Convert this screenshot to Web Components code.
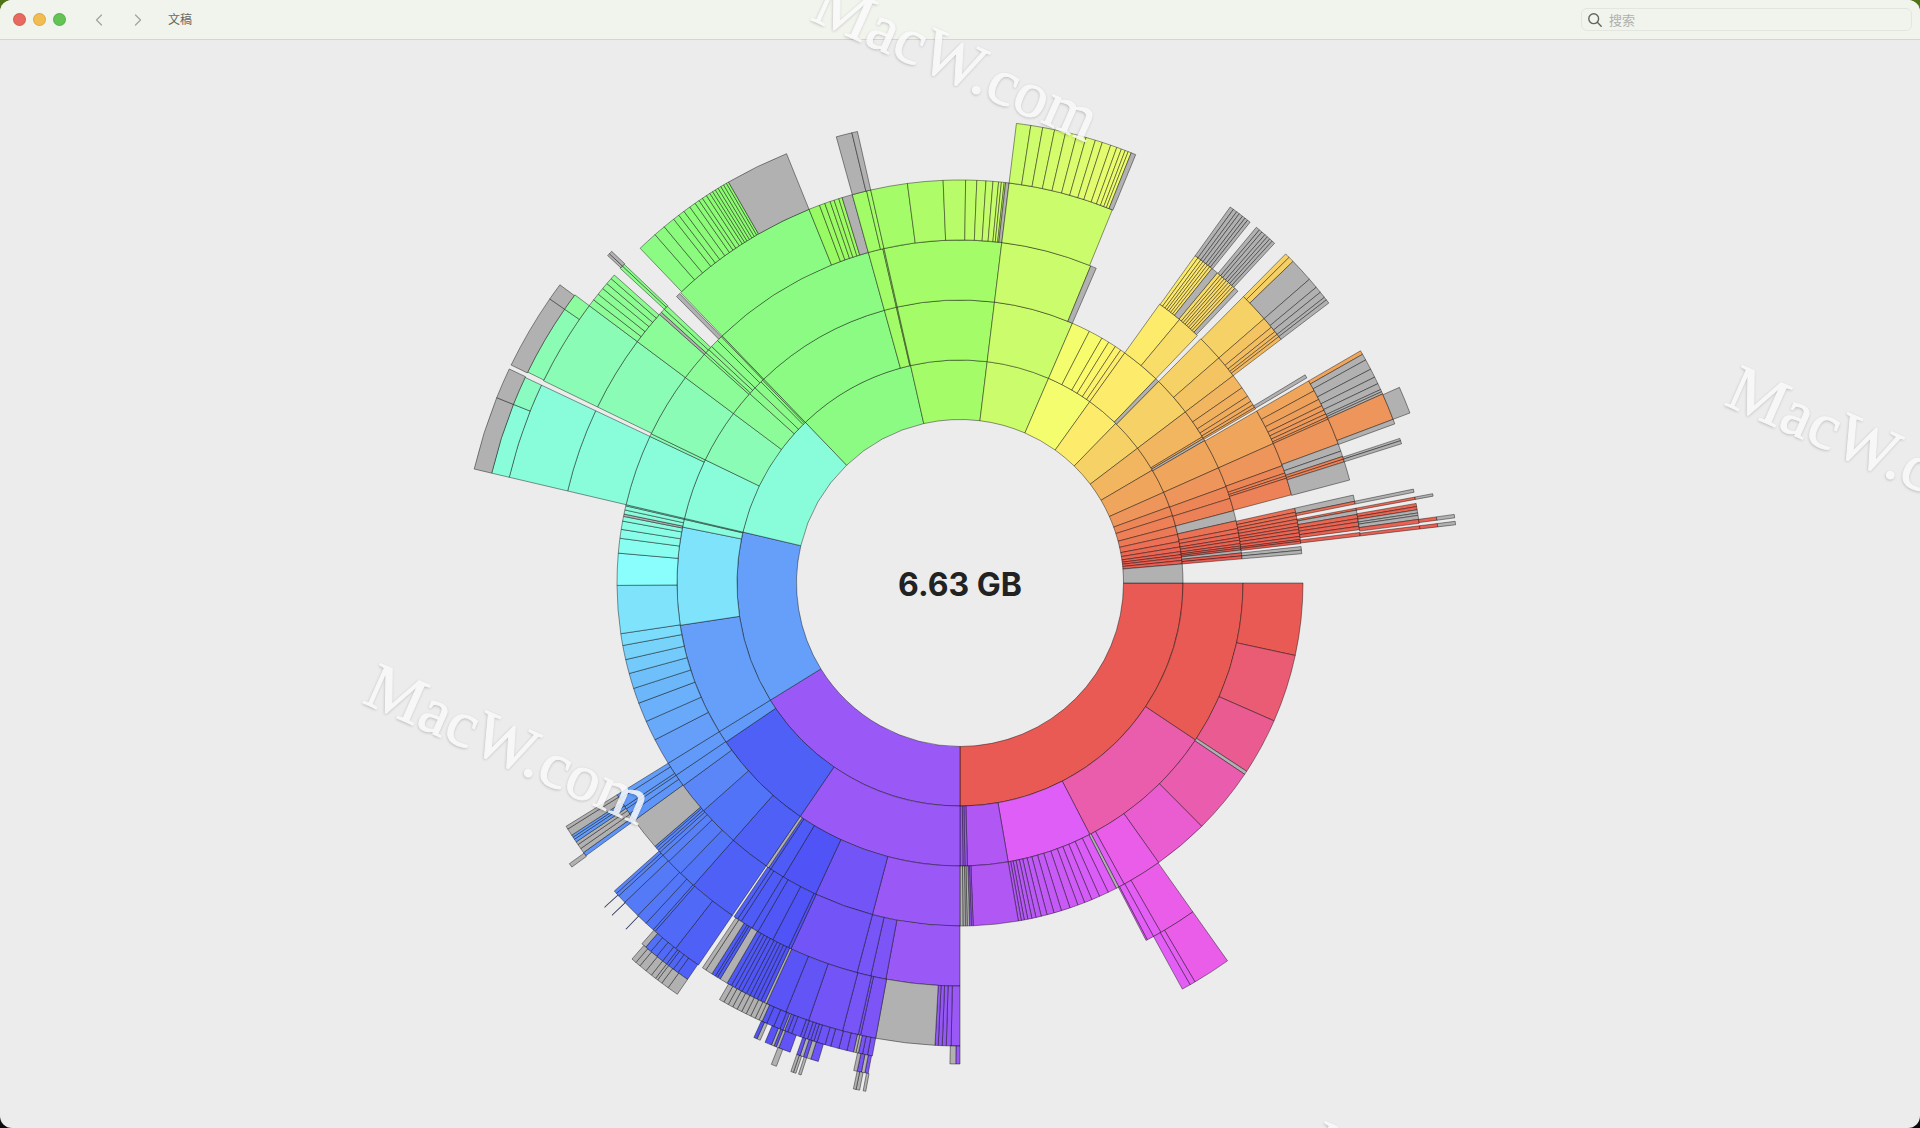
<!DOCTYPE html>
<html lang="zh-CN">
<head>
<meta charset="utf-8">
<title>文稿</title>
<style>
  html, body { height: 100%; }
  body {
    margin: 0;
    background: linear-gradient(#4f7416, #20240f 60%, #0c0d0b);
    font-family: Inter, "Noto Sans CJK SC", sans-serif;
    overflow: hidden;
  }
</style>
</head>
<body>
<disk-window>
  <title-bar slot="bar" heading="文稿">
    <search-field slot="tools" placeholder="搜索"></search-field>
  </title-bar>
  <sunburst-chart><span>6.63 GB</span></sunburst-chart>
  <water-mark slot="marks" style="--x:361px;--y:702px">MacW.com</water-mark>
  <water-mark slot="marks" style="--x:809px;--y:19px">MacW.com</water-mark>
  <water-mark slot="marks" style="--x:1723px;--y:404px">MacW.com</water-mark>
  <water-mark slot="marks" style="--x:1306px;--y:1160px">MacW.com</water-mark>
</disk-window>

<script>
class Base extends HTMLElement {
  constructor() {
    super();
    this.attachShadow({ mode: "open" });
  }
  connectedCallback() {
    this.shadowRoot.innerHTML = this.render();
  }
}

customElements.define("disk-window", class extends Base {
  render() {
    return `<style>
      :host { display: flex; flex-direction: column; height: 100vh; position: relative;
        overflow: hidden; border-radius: 12px; background: #ececec; }
      main { flex: 1; min-height: 0; display: flex; }
      ::slotted(sunburst-chart) { flex: 1; }
    </style>
    <slot name="bar"></slot>
    <main><slot></slot></main>
    <slot name="marks"></slot>`;
  }
});

customElements.define("title-bar", class extends Base {
  render() {
    return `<style>
      :host { display: block; }
      header { display: flex; align-items: center; height: 40px; box-sizing: border-box;
        padding: 0 8px 0 13px; background: #f1f4ed; border-bottom: 1px solid #d4d6d0; }
      button { border: 0; padding: 0; background: none; display: grid; place-items: center; }
      .lights { display: flex; gap: 7px; }
      .lights button { width: 13px; height: 13px; border-radius: 50%; box-shadow: inset 0 0 0 1px #0000001a; }
      nav { display: flex; gap: 15px; margin: 0 18px 0 21px; }
      nav button { width: 24px; height: 24px; }
      path { fill: none; stroke: #a3a59f; stroke-width: 1.3; stroke-linecap: round; stroke-linejoin: round; }
      h1 { margin: 0; font-size: 12px; line-height: 16px; font-weight: 400; color: #656762; }
      .gap { flex: 1; }
    </style>
    <header>
      <div class="lights">
        <button aria-label="关闭" style="background:#e8695f"></button>
        <button aria-label="最小化" style="background:#f2bc50"></button>
        <button aria-label="缩放" style="background:#63c455"></button>
      </div>
      <nav>
        <button aria-label="后退"><svg width="12" height="12"><path d="M8.5 1 3.5 6l5 5"/></svg></button>
        <button aria-label="前进"><svg width="12" height="12"><path d="m3.500 1 5 5-5 5"/></svg></button>
      </nav>
      <h1>${this.getAttribute("heading")}</h1>
      <div class="gap"></div>
      <slot name="tools"></slot>
    </header>`;
  }
});

customElements.define("search-field", class extends Base {
  render() {
    const p = this.getAttribute("placeholder");
    return `<style>
      :host { display: block; }
      label { display: flex; align-items: center; gap: 7px; width: 331px; height: 23px;
        box-sizing: border-box; padding: 0 6px; border: 1px solid #e3e6df; border-radius: 6px; }
      svg { flex: none; }
      input { flex: 1; min-width: 0; border: 0; padding: 0; outline: 0; background: none;
        font: 13px/20px "Noto Sans CJK SC", sans-serif; color: #444; }
      input::placeholder { color: #afb1ac; opacity: 1; }
    </style>
    <label>
      <svg width="14" height="14" fill="none" stroke="#62645f" stroke-width="1.4" stroke-linecap="round">
        <circle cx="5.700" cy="5.700" r="4.900"/><path d="m9.300 9.300 3.900 3.900"/></svg>
      <input type="search" aria-label="${p}" placeholder="${p}">
    </label>`;
  }
});

customElements.define("water-mark", class extends Base {
  render() {
    return `<style>
      :host { position: absolute; left: var(--x); top: var(--y); pointer-events: none; }
      span { position: absolute; left: 0; bottom: 0; transform: rotate(24deg);
        transform-origin: 0 100%; font: 66px/44px "Liberation Serif", serif; white-space: nowrap;
        color: #fafafa; opacity: .85; -webkit-text-stroke: 1px #fafafa; text-shadow: 0 1px 3px #00000050; }
    </style>
    <span><slot></slot></span>`;
  }
});

/* Ring edges, from the centre outwards. */
const RADII = [163.5, 223, 283, 343, 403, 463, 481, 499, 517];

/* One line for each ring: the start angle of every slice, clockwise from east.
   g = grey slice, x = empty space. */
const RINGS = [
  "0 90 148.3 193.2 226.1 257.2 277 293.4 305.6 314.3 322.8 329.6 336 340 342.4 345.2 347.4 349.3 350.7 351.9 352.7 353.4 354.2 355.1g 360x",
  "0 33.7 62.7 80.2 88.5 89 89.4 90 124.4 145.8 148.3 171.4 191.4 193 193.2 205.8 216.8 222 223.6 225.3 225.8 226.1 254.5 257 257.2 277 293.4 297.2 300.1 301.7 303.3 304.6 305.6 313.8g 314.6 322.8 328.9 329.3g 329.8 336 340.1 342.6 345.2g 347.3 348.9 349.8 350.7 351.3 352 352.5 352.9 353.3g 353.9 354.5 355.1x",
  "0 12.2 23.7 33.3g 33.9 45.2 54.6 61.4 62.4g 62.900 64.4 66 67.4 68.7 69.9 71.3 72.8 74.1 75.3 76.3 77.2 77.9 78.6 79.2 79.7 80.2 87.8 88.1 88.4g 88.8g 89.1g 89.5g 90 104.8 114.9 121 123.5 123.9g 124.4 131.4 138.4 143.8 145.9 148.3 152.8 156.2 159.5 162.1 164.7 167.1 169.5 171.5 179.6 185 187.5 189 190.4 191.2g 191.6 192.3 193 193.2 205.3 205.8 216.8 221.8 222.2 222.900 223.6 225 225.9 226.1 254.5 257 257.2 277 292.4g 293.4x 305.6 309.8 313.8x 314.6 319 322.8 325.3 327 328 328.7 329.2 329.5x 329.9 336 340 341.3 341.8 342.2 345.1x 347.4 348.1 348.7 349.3 349.9 350.5 351 351.6 352.2 352.7 353 353.4x 353.9g 354.5g 355.1x",
  "54.7 60.1 61.3 62.3 62.5x 90 100.6 102.8 104.8 114.8 115.2 117.7 120.1 121.1 122.9 123.5 124.1x 124.4 131.4 133.9 136.3 137.5 138.1 138.5 138.9 139.2g 143.9 145.1 145.9 146.3 147.6 148.3x 193.2 205.3x 205.9 216.8 221.8g 222.2 222.8 223.4x 225.3g 225.9x 226.1 248 249.6 250.4 251.2 251.8 252.5 253g 254.5 256.6 257.2 262.5 267.6 270.8 272.4 273.7 274.7 275.5 275.9 276.3 276.5g 277 292.2x 305.7 306.2 306.7 307.1 307.5 307.9 308.3 308.7g 309.7 310.2 310.6 311 311.4 311.8 312.2 312.6 313g 313.6x 314.7 319 320.6 321.4 321.9 322.3 322.8x 328.9g 329.4x 329.9 331.5 332.9 333.9 334.6 335.2 335.7 336 339.8g 340.9g 341.7 342.1 342.5g 345.2x 347.4g 348.3 348.7x 349.3 349.6g 350.2 350.8 351.3 351.9 352.4x 352.8 353.3x",
  "54.7 59.5 60.2 61.3x 90 91.1 91.7 92.2 92.7 93.1g 100.5 102.4 102.7 104.7 109.1 112.1 114.7g 115 115.5 116 116.5 117 117.5 118.1 118.6 119.1 119.6 120.2g 121.200 121.600 121.900 122.4g 123.3g 123.8x 124.4 127.9 131.2 131.500 132.7 134.1 136.4 137.5 137.9 138.3x 143.9 144.4g 145g 145.6g 146 146.4 146.7 147g 147.9g 148.3x 193.2 205.3x 205.9 216.8 217.7 218.6 219.5 220.3 221.1 221.7x 222.8 223.2 223.5x 226.3 228.8 230.300 231.8 232.6 233.400 234.3 235.1 235.7 236.2 236.800 237.3 237.7 238.1 238.5 238.9 239.3 239.7 240g 248x 254.5g 256.5g 257.2x 277 278.8 280.3 281.8 283.2 284.6 285.8 287 287.9 289 289.8 290.4 290.9 291.3 291.7g 292.3x 305.7g 306.200g 306.7g 307.1g 307.600g 308g 308.4g 308.8x 309.8g 310.3g 310.7g 311.2g 311.6g 312g 312.4g 312.8x 314.7 315.3 316g 319g 320.3g 321.1g 321.9g 322.3g 322.8x 329.9 330.4g 331.2g 332.5g 333.6g 334.5g 335.3g 335.6g 335.9 339.3g 339.900x 341.8g 342.1g 342.5x 348.3g 348.7x 349.3 349.6x 350.1 350.5 350.9g 351.3g 351.6g 352.1 352.6x 352.9 353.3x",
  "90 90.5g 91.2x 100.5 101.1 101.7 102.2g 102.5g 102.8 103.6 104.6 105.6 106.3 107.3 107.700 108.1 108.5 109 109.4 110.5 111 111.4g 111.6 112 112.8 113.7 114.3g 114.7g 115.2g 115.8g 116.400g 117g 117.600g 118.200g 118.800g 119.4g 120x 124.5 125.9 126.6 127.3 127.600 128.2 129.1 130 130.8g 131.4x 133.95 134x 136.3 136.35x 137.6 137.65x 143.8g 144.3x 193.2 201.8 205.3x 206 214.7 216.8x 222.9g 223.2g 223.6x 336g 339.3x 349.3g 349.6x 352.1 352.5x 352.9 353.3x",
  "100.6 101g 101.4 101.9g 102.3x 106.5 107.4g 107.9 108.3g 108.7 109.1x 109.9 111.3g 111.600 111.9g 112.2 113x 113.6g 114 114.4x 124.5g 125.8g 126.7g 127.3g 127.6g 128.2g 129g 129.9g 130.5g 131.1x 193.2g 201.8g 205.4x 205.9g 214.7g 216.7x 352.1g 352.5x 352.9g 353.3x",
  "100.5g 100.8x 101.2g 101.6g 101.9x 107.9g 108.2x 108.5g 108.8g 109.1x 110.8g 111.4x"
];

/* Slice colour at its start angle; values in between are mixed. */
const WHEEL = [
  [0, "e95a54"], [12, "ea5b74"], [23.7, "ea5b91"], [33.7, "ea5cac"], [45, "e95dd0"], [54.6, "ea5de8"],
  [62, "e15ef8"], [80, "b158f4"], [90, "9a58f6"], [104.7, "7254f7"], [115, "5053f5"], [124.4, "4f60f7"],
  [131.4, "5173f7"], [138.4, "5a86f8"], [145.9, "619af8"], [148.3, "659ff9"], [160, "6cb8fa"],
  [171.4, "7fe3fb"], [179.6, "89fefd"], [193.1, "89fcda"], [205.8, "8bfcb5"], [216.8, "8cfc99"],
  [226.1, "8bfb83"], [240, "8cfb70"], [248, "98fb63"], [257, "a4fc68"], [277, "cbfc6b"], [286, "defc6f"],
  [293, "f2fd6e"], [300, "fbfb6d"], [305.6, "fdec6c"], [309.8, "f9dd69"], [314.5, "f6d266"],
  [319, "f4c362"], [322.8, "f1b65f"], [329.8, "efa65c"], [336, "ed955a"], [340, "ed8657"],
  [345, "ec7a56"], [350, "ea6653"], [355, "e95c53"], [360, "e95a54"]
];

function wheelColor(a) {
  const i = Math.max(1, WHEEL.findIndex(w => w[0] >= a));
  const [a0, c0] = WHEEL[i - 1], [a1, c1] = WHEEL[i];
  const t = (a - a0) / (a1 - a0);
  const ch = k => {
    const u = parseInt(c0.substr(k, 2), 16), v = parseInt(c1.substr(k, 2), 16);
    return Math.round(u + (v - u) * t);
  };
  return `rgb(${ch(0)},${ch(2)},${ch(4)})`;
}

function slicePath(r0, r1, a, b) {
  const pt = (r, d) => {
    const t = d * Math.PI / 180;
    return (r * Math.cos(t)).toFixed(2) + " " + (r * Math.sin(t)).toFixed(2);
  };
  return `M${pt(r0, a)}L${pt(r1, a)}A${r1} ${r1} 0 0 1 ${pt(r1, b)}L${pt(r0, b)}A${r0} ${r0} 0 0 0 ${pt(r0, a)}Z`;
}

customElements.define("sunburst-chart", class extends Base {
  render() {
    let slices = "";
    RINGS.forEach((line, n) => {
      const cells = line.split(" ").map(s => ({ at: parseFloat(s), kind: s.slice(-1) }));
      for (let i = 0; i < cells.length - 1; i++) {
        const c = cells[i];
        if (c.kind === "x") continue;
        const fill = c.kind === "g" ? "#b1b1b1" : wheelColor(c.at);
        slices += `<path fill="${fill}" d="${slicePath(RADII[n], RADII[n + 1], c.at, cells[i + 1].at)}"/>`;
      }
    });
    return `<style>
      :host { display: grid; grid-template: minmax(0, 1fr) / minmax(0, 1fr); place-items: center; }
      svg, .total { grid-area: 1 / 1; }
      svg { width: 100%; height: 100%; }
      path { stroke: #000; stroke-opacity: .6; stroke-width: .7; stroke-linejoin: round; }
      .total { padding-top: 2px; font-size: 32px; line-height: 40px; font-weight: 700; color: #222; }
    </style>
    <svg viewBox="-544 -543 1088 1088" aria-hidden="true">${slices}</svg>
    <div class="total"><slot></slot></div>`;
  }
});
</script>
</body>
</html>
